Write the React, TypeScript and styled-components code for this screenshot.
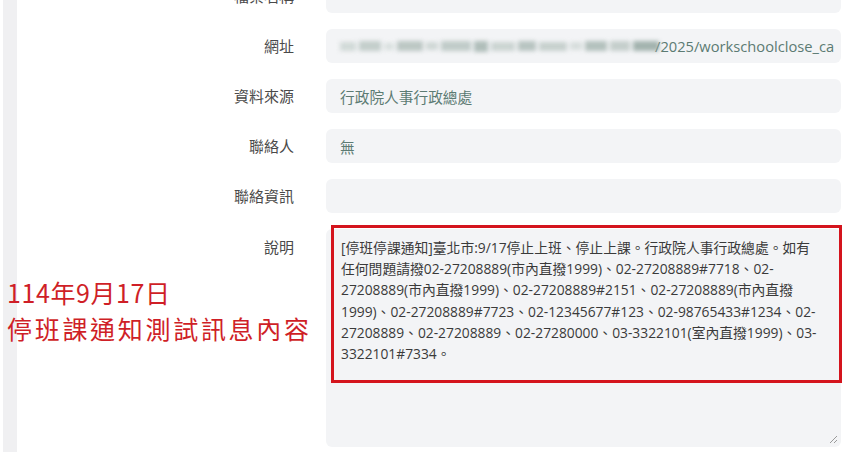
import React from "react";
import styled, { createGlobalStyle } from "styled-components";

const Global = createGlobalStyle`
  html, body { margin: 0; padding: 0; background: #ffffff; }
  body { font-family: "Noto Sans", "Noto Sans CJK TC", sans-serif; }
`;

const Page = styled.div`
  position: relative;
  display: flex;
  width: 858px;
  height: 452px;
  overflow: hidden;
  background: #ffffff;
`;

const SideStrip = styled.div`
  width: 14px;
  margin-left: 3px;
  background: #f0f0f2;
  flex: none;
`;

const Form = styled.div`
  display: grid;
  grid-template-columns: 277px 515px;
  column-gap: 32px;
  row-gap: 16px;
  align-content: start;
  align-items: center;
  margin-top: -21px;
`;

const Label = styled.div<{ $top?: boolean }>`
  text-align: right;
  font-family: "Noto Sans CJK TC", sans-serif;
  font-size: 15px;
  line-height: 20px;
  color: #4a4a4a;
  align-self: ${(p) => (p.$top ? "start" : "center")};
  padding-top: ${(p) => (p.$top ? "8px" : "0")};
`;

const Field = styled.div`
  height: 34px;
  box-sizing: border-box;
  background: #f3f4f6;
  border-radius: 6px;
  padding: 0 8px 0 14px;
  display: flex;
  align-items: center;
  overflow: hidden;
  white-space: nowrap;
  font-family: "Open Sans", "Noto Sans CJK TC", sans-serif;
  font-size: 14.7px;
  color: #5c7b73;
`;

const Mosaic = styled.div`
  display: flex;
  align-items: center;
  gap: 3px;
  width: 315px;
  height: 12px;
  flex: none;
  filter: blur(2.2px);
  opacity: 0.8;
`;

const Tile = styled.span<{ $w: number; $c: string; $h: number }>`
  display: block;
  width: ${(p) => p.$w}px;
  height: ${(p) => p.$h}px;
  background: ${(p) => p.$c};
  flex: none;
`;

const AreaWrap = styled.div`
  position: relative;
  height: 218px;
`;

const Area = styled.div`
  height: 100%;
  box-sizing: border-box;
  background: #f3f4f6;
  border-radius: 6px;
  padding: 8px 10px 0 15px;
  font-family: "Open Sans", "Noto Sans CJK TC", sans-serif;
  font-size: 13.8px;
  line-height: 21.2px;
  color: #3a3a3a;
  white-space: nowrap;
  overflow: hidden;
`;

const Line = styled.div``;

const Handle = styled.svg`
  position: absolute;
  right: 3px;
  bottom: 3px;
`;

const RedBox = styled.div`
  position: absolute;
  left: 5px;
  top: -4px;
  right: -1px;
  height: 158px;
  box-sizing: border-box;
  border: 3px solid #d4141d;
  pointer-events: none;
`;

const Annotation = styled.div`
  position: absolute;
  left: 7px;
  top: 274px;
  font-family: "Noto Sans CJK TC", sans-serif;
  font-size: 25px;
  line-height: 36px;
  color: #cf1f27;
`;

const AnnotLine = styled.div<{ $ls: number }>`
  letter-spacing: ${(p) => p.$ls}px;
`;

const lines = [
  "[停班停課通知]臺北市:9/17停止上班、停止上課。行政院人事行政總處。如有",
  "任何問題請撥02-27208889(市內直撥1999)、02-27208889#7718、02-",
  "27208889(市內直撥1999)、02-27208889#2151、02-27208889(市內直撥",
  "1999)、02-27208889#7723、02-12345677#123、02-98765433#1234、02-",
  "27208889、02-27208889、02-27280000、03-3322101(室內直撥1999)、03-",
  "3322101#7334。",
];

const tiles: { w: number; c: string; h: number }[] = [
  { w: 16, c: "#c9d3d0", h: 9 },
  { w: 22, c: "#b7c4c0", h: 10 },
  { w: 10, c: "#d3dbd9", h: 7 },
  { w: 26, c: "#aebbb7", h: 10 },
  { w: 12, c: "#c6d0cd", h: 8 },
  { w: 30, c: "#b3c1bd", h: 10 },
  { w: 14, c: "#9fb0ab", h: 11 },
  { w: 24, c: "#c1ccc9", h: 9 },
  { w: 18, c: "#a9b8b4", h: 10 },
  { w: 28, c: "#bcc8c4", h: 9 },
  { w: 12, c: "#d0d8d6", h: 8 },
  { w: 22, c: "#a4b4af", h: 10 },
  { w: 20, c: "#b9c5c1", h: 10 },
  { w: 26, c: "#8fa39d", h: 10 },
];

export default function App() {
  return (
    <Page>
      <Global />
      <SideStrip />
      <Form>
        <Label>檔案名稱</Label>
        <Field />
        <Label>網址</Label>
        <Field>
          <Mosaic>
            {tiles.map((t, i) => (
              <Tile key={i} $w={t.w} $c={t.c} $h={t.h} />
            ))}
          </Mosaic>
          <span>/2025/workschoolclose_ca</span>
        </Field>
        <Label>資料來源</Label>
        <Field>行政院人事行政總處</Field>
        <Label>聯絡人</Label>
        <Field>無</Field>
        <Label>聯絡資訊</Label>
        <Field />
        <Label $top>說明</Label>
        <AreaWrap>
          <Area>
            {lines.map((l, i) => (
              <Line key={i}>{l}</Line>
            ))}
          </Area>
          <Handle width="10" height="10" viewBox="0 0 10 10">
            <path d="M9 2 L2 9 M9 6 L6 9" stroke="#9a9a9a" strokeWidth="1" fill="none" />
          </Handle>
          <RedBox />
        </AreaWrap>
      </Form>
      <Annotation>
        <AnnotLine $ls={0.6}>114年9月17日</AnnotLine>
        <AnnotLine $ls={2.7}>停班課通知測試訊息內容</AnnotLine>
      </Annotation>
    </Page>
  );
}
